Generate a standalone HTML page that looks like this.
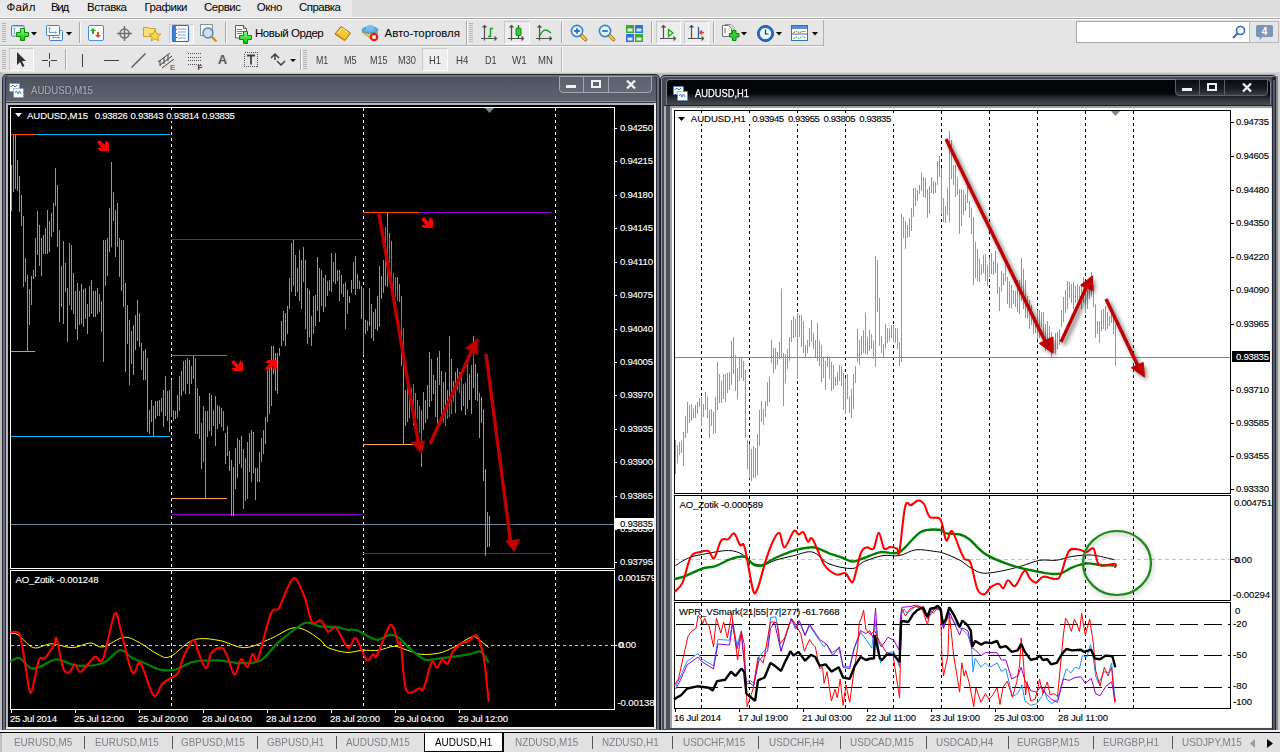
<!DOCTYPE html><html><head><meta charset="utf-8"><style>
*{margin:0;padding:0;box-sizing:border-box}
html,body{width:1280px;height:752px;overflow:hidden;background:#d4d4d4;font-family:"Liberation Sans", sans-serif;font-size:11px;color:#000}
.a{position:absolute}
.t{position:absolute;white-space:nowrap;line-height:1}
svg{position:absolute;overflow:visible}
</style></head><body>

<div class="a" style="left:0;top:0;width:1280px;height:17px;background:#dcdcdc"></div>
<div class="a" style="left:0;top:0;width:352px;height:17px;background:#e9e9e9"></div>
<div class="t" style="left:6.5px;top:2.27px;font-size:11.5px;letter-spacing:0.242px;color:#000;">Файл</div>
<div class="t" style="left:51px;top:2.27px;font-size:11.5px;letter-spacing:-1.302px;color:#000;">Вид</div>
<div class="t" style="left:87px;top:2.27px;font-size:11.5px;letter-spacing:-0.457px;color:#000;">Вставка</div>
<div class="t" style="left:144.4px;top:2.27px;font-size:11.5px;letter-spacing:-0.452px;color:#000;">Графики</div>
<div class="t" style="left:204px;top:2.27px;font-size:11.5px;letter-spacing:-0.476px;color:#000;">Сервис</div>
<div class="t" style="left:256.7px;top:2.27px;font-size:11.5px;letter-spacing:-0.341px;color:#000;">Окно</div>
<div class="t" style="left:299px;top:2.27px;font-size:11.5px;letter-spacing:-0.519px;color:#000;">Справка</div>
<div class="a" style="left:0;top:17px;width:1280px;height:55px;background:#e4e4e4"></div>
<div class="a" style="left:0;top:17px;width:1280px;height:1px;background:#fdfdfd"></div>
<div class="a" style="left:0;top:18px;width:1280px;height:1px;background:#a0a0a0"></div>
<div class="a" style="left:0;top:19px;width:1280px;height:1px;background:#fdfdfd"></div>
<div class="a" style="left:0;top:20px;width:824px;height:26px;background:#e6e6e6;border-bottom:1px solid #b0b0b0;border-right:1px solid #b0b0b0"></div><div class="a" style="left:0;top:46px;width:823px;height:1px;background:#fafafa"></div><div class="a" style="left:0;top:47px;width:563px;height:25px;background:#e6e6e6;border-right:1px solid #fafafa;box-shadow:inset -1px 0 0 #b4b4b4"></div><div class="a" style="left:2px;top:23px;width:4px;height:1px;background:#b4b4b4"></div><div class="a" style="left:2px;top:25px;width:4px;height:1px;background:#b4b4b4"></div><div class="a" style="left:2px;top:27px;width:4px;height:1px;background:#b4b4b4"></div><div class="a" style="left:2px;top:29px;width:4px;height:1px;background:#b4b4b4"></div><div class="a" style="left:2px;top:31px;width:4px;height:1px;background:#b4b4b4"></div><div class="a" style="left:2px;top:33px;width:4px;height:1px;background:#b4b4b4"></div><div class="a" style="left:2px;top:35px;width:4px;height:1px;background:#b4b4b4"></div><div class="a" style="left:2px;top:37px;width:4px;height:1px;background:#b4b4b4"></div><div class="a" style="left:2px;top:39px;width:4px;height:1px;background:#b4b4b4"></div><div class="a" style="left:2px;top:41px;width:4px;height:1px;background:#b4b4b4"></div><div class="a" style="left:2px;top:50px;width:4px;height:1px;background:#b4b4b4"></div><div class="a" style="left:2px;top:52px;width:4px;height:1px;background:#b4b4b4"></div><div class="a" style="left:2px;top:54px;width:4px;height:1px;background:#b4b4b4"></div><div class="a" style="left:2px;top:56px;width:4px;height:1px;background:#b4b4b4"></div><div class="a" style="left:2px;top:58px;width:4px;height:1px;background:#b4b4b4"></div><div class="a" style="left:2px;top:60px;width:4px;height:1px;background:#b4b4b4"></div><div class="a" style="left:2px;top:62px;width:4px;height:1px;background:#b4b4b4"></div><div class="a" style="left:2px;top:64px;width:4px;height:1px;background:#b4b4b4"></div><div class="a" style="left:2px;top:66px;width:4px;height:1px;background:#b4b4b4"></div><div class="a" style="left:2px;top:68px;width:4px;height:1px;background:#b4b4b4"></div><div class="a" style="left:469px;top:23px;width:4px;height:1px;background:#b4b4b4"></div><div class="a" style="left:469px;top:25px;width:4px;height:1px;background:#b4b4b4"></div><div class="a" style="left:469px;top:27px;width:4px;height:1px;background:#b4b4b4"></div><div class="a" style="left:469px;top:29px;width:4px;height:1px;background:#b4b4b4"></div><div class="a" style="left:469px;top:31px;width:4px;height:1px;background:#b4b4b4"></div><div class="a" style="left:469px;top:33px;width:4px;height:1px;background:#b4b4b4"></div><div class="a" style="left:469px;top:35px;width:4px;height:1px;background:#b4b4b4"></div><div class="a" style="left:469px;top:37px;width:4px;height:1px;background:#b4b4b4"></div><div class="a" style="left:469px;top:39px;width:4px;height:1px;background:#b4b4b4"></div><div class="a" style="left:469px;top:41px;width:4px;height:1px;background:#b4b4b4"></div><div class="a" style="left:303px;top:50px;width:4px;height:1px;background:#b4b4b4"></div><div class="a" style="left:303px;top:52px;width:4px;height:1px;background:#b4b4b4"></div><div class="a" style="left:303px;top:54px;width:4px;height:1px;background:#b4b4b4"></div><div class="a" style="left:303px;top:56px;width:4px;height:1px;background:#b4b4b4"></div><div class="a" style="left:303px;top:58px;width:4px;height:1px;background:#b4b4b4"></div><div class="a" style="left:303px;top:60px;width:4px;height:1px;background:#b4b4b4"></div><div class="a" style="left:303px;top:62px;width:4px;height:1px;background:#b4b4b4"></div><div class="a" style="left:303px;top:64px;width:4px;height:1px;background:#b4b4b4"></div><div class="a" style="left:303px;top:66px;width:4px;height:1px;background:#b4b4b4"></div><div class="a" style="left:303px;top:68px;width:4px;height:1px;background:#b4b4b4"></div><svg style="left:11px;top:25px" width="18" height="16" viewBox="0 0 18 16"><defs><linearGradient id="gp" x1="0" y1="0" x2="0" y2="1"><stop offset="0" stop-color="#7aff7a"/><stop offset="1" stop-color="#10c010"/></linearGradient></defs><rect x="0.5" y="0.5" width="12.5" height="10.5" rx="1" fill="#f4f8fc" stroke="#3f7fc4"/><path d="M1 1.5h12" stroke="#a8c8f0"/><path d="M3.5 3v6M2.5 4l1-1 1 1M2.5 8l1 1 1-1" stroke="#7f9fbf" fill="none"/></svg><svg style="left:16px;top:28px" width="13" height="13" viewBox="0 0 13 13"><path d="M4.5 0.5h4v4h4v4h-4v4h-4v-4h-4v-4h4z" fill="url(#gp)" stroke="#0a8a0a" stroke-linejoin="miter"/></svg><svg style="left:31px;top:32px" width="6" height="4" viewBox="0 0 6 4"><path d="M0 0H6L3 3.5z" fill="#000"/></svg><svg style="left:46px;top:25px" width="18" height="17" viewBox="0 0 18 17"><rect x="3.5" y="5.5" width="13" height="10" rx="1" fill="#f4f8fc" stroke="#3f7fc4"/><rect x="0.5" y="0.5" width="13" height="10" rx="1" fill="#f4f8fc" stroke="#3f7fc4"/><path d="M3.5 2.5v5.5M2.5 3.5l1-1 1 1M3.5 7.5h7M9.5 6.5l1 1-1 1M6.5 12.5h7M7.5 11.5l-1 1 1 1M12.5 11.5l1 1-1 1" stroke="#7f9fbf" fill="none"/></svg><svg style="left:66px;top:32px" width="6" height="4" viewBox="0 0 6 4"><path d="M0 0H6L3 3.5z" fill="#000"/></svg><div class="a" style="left:79px;top:22px;width:1px;height:21px;background:#a8a8a8"></div><div class="a" style="left:80px;top:22px;width:1px;height:21px;background:#fafafa"></div><svg style="left:88px;top:25px" width="16" height="16" viewBox="0 0 16 16"><rect x="0.5" y="0.5" width="15" height="15" rx="1.5" fill="#f8fbff" stroke="#3f8fe0"/><path d="M5 3l3 3h-2v3h-2v-3h-2z" fill="#20b020"/><path d="M10 13l3-3h-2v-3h-2v3h-2z" fill="#e05020"/></svg><svg style="left:117px;top:26px" width="15" height="15" viewBox="0 0 15 15"><circle cx="7.5" cy="7.5" r="4.5" fill="none" stroke="#707070" stroke-width="1.5"/><path d="M7.5 0v15M0 7.5h15" stroke="#707070" stroke-width="1.5"/></svg><svg style="left:143px;top:24px" width="18" height="18" viewBox="0 0 18 18"><path d="M0.5 3.5h5l1 1h6v8h-12z" fill="#f8e080" stroke="#c8a030"/><path d="M12 6l1.8 3.8 4 .4-3 2.7.9 4-3.7-2.1-3.7 2.1.9-4-3-2.7 4-.4z" fill="#f8d840" stroke="#b89020" stroke-width=".8"/></svg><div class="a" style="left:169px;top:24px;width:25px;height:20px;background:#ededed;border:1px solid;border-color:#c8c8c8 #fdfdfd #fdfdfd #c8c8c8"></div><svg style="left:172px;top:25px" width="17" height="17" viewBox="0 0 17 17"><rect x="0.5" y="0.5" width="16" height="16" rx="1" fill="#fff" stroke="#2f6fc0" stroke-width="1.2"/><rect x="1" y="1" width="3" height="15" fill="#3f7fd0"/><path d="M6 4h8M6 7h8M6 10h8M6 13h8" stroke="#7f9fcf"/><path d="M4.5 4v1M4.5 8v1M4.5 12v1" stroke="#e03030"/></svg><svg style="left:200px;top:24px" width="18" height="18" viewBox="0 0 18 18"><rect x="0.5" y="0.5" width="12" height="11" fill="#f8f8f8" stroke="#909090"/><circle cx="8" cy="9" r="5" fill="#c8e0f8" stroke="#6080a0" stroke-width="1.4"/><path d="M11.5 12.5l5 5" stroke="#c89020" stroke-width="2.4"/></svg><div class="a" style="left:225px;top:22px;width:1px;height:21px;background:#a8a8a8"></div><div class="a" style="left:226px;top:22px;width:1px;height:21px;background:#fafafa"></div><svg style="left:235px;top:25px" width="17" height="18" viewBox="0 0 17 18"><path d="M0.5 0.5h8l3 3v9.5h-11z" fill="#fafafa" stroke="#606060"/><path d="M8.5 0.5v3h3" fill="#d0d0d0" stroke="#606060"/><path d="M2 4.5h5M2 6.5h7M2 8.5h5" stroke="#808080"/></svg><svg style="left:239px;top:31px" width="13" height="13" viewBox="0 0 13 13"><path d="M4.5 0.5h4v4h4v4h-4v4h-4v-4h-4v-4h4z" fill="url(#gp)" stroke="#0a8a0a"/></svg><div class="t" style="left:255px;top:28.07px;font-size:11.5px;letter-spacing:-0.452px;color:#000;">Новый Ордер</div><svg style="left:334px;top:25px" width="18" height="17" viewBox="0 0 18 17"><path d="M1 9L7 1.5L16.5 8L11 15.5Z" fill="#f2c830" stroke="#a06810" stroke-linejoin="round"/><path d="M2.5 9.5L11 15.5" stroke="#c89020" stroke-width="2"/><path d="M4 8L8 3L14 7.5" fill="none" stroke="#fff2a8"/></svg><svg style="left:361px;top:24px" width="18" height="18" viewBox="0 0 18 18"><path d="M1 8l9-3 7 4-5 7z" fill="#f0d040" stroke="#b08020" stroke-width=".8"/><ellipse cx="9" cy="6" rx="8" ry="3.2" fill="#5fb0e0" stroke="#3080b0" stroke-width=".8"/><ellipse cx="9" cy="4" rx="4" ry="3" fill="#70c0f0"/><circle cx="13" cy="13" r="4.3" fill="#e02020"/><rect x="11.3" y="11.3" width="3.4" height="3.4" fill="#fff"/></svg><div class="t" style="left:384.5px;top:28.07px;font-size:11.5px;letter-spacing:-0.037px;color:#000;">Авто-торговля</div><div class="a" style="left:466px;top:21px;width:1px;height:24px;background:#a8a8a8"></div><div class="a" style="left:467px;top:21px;width:1px;height:24px;background:#fafafa"></div><svg style="left:480px;top:24px" width="18" height="18" viewBox="0 0 18 18"><path d="M4.5 1.5V15M2.5 3.5L4.5 1.5L6.5 3.5M1 14.5H16.5M14.5 12.5L16.5 14.5L14.5 16.5M4.5 14.5V16.5M1.5 14.5" stroke="#505050" fill="none" stroke-width="1.2"/><path d="M13 4.5H10.5V12.5H8" stroke="#20a020" fill="none" stroke-width="1.5" stroke-linejoin="miter" stroke-linecap="butt"/></svg><div class="a" style="left:504px;top:21px;width:26px;height:23px;background:#ededed;border:1px solid;border-color:#c8c8c8 #fdfdfd #fdfdfd #c8c8c8"></div><svg style="left:507px;top:24px" width="18" height="18" viewBox="0 0 18 18"><path d="M4.5 1.5V15M2.5 3.5L4.5 1.5L6.5 3.5M1 14.5H16.5M14.5 12.5L16.5 14.5L14.5 16.5M4.5 14.5V16.5M1.5 14.5" stroke="#505050" fill="none" stroke-width="1.2"/><path d="M11.5 1V14" stroke="#206020" stroke-width="1.2"/><rect x="9" y="4" width="5" height="7.5" rx="1" fill="#30d030" stroke="#208020"/></svg><svg style="left:535px;top:24px" width="18" height="18" viewBox="0 0 18 18"><path d="M4.5 1.5V15M2.5 3.5L4.5 1.5L6.5 3.5M1 14.5H16.5M14.5 12.5L16.5 14.5L14.5 16.5M4.5 14.5V16.5M1.5 14.5" stroke="#505050" fill="none" stroke-width="1.2"/><path d="M5 11.5C8 5 11 4.5 16 9" stroke="#20a020" fill="none" stroke-width="1.4"/></svg><div class="a" style="left:561px;top:22px;width:1px;height:21px;background:#a8a8a8"></div><div class="a" style="left:562px;top:22px;width:1px;height:21px;background:#fafafa"></div><svg style="left:570px;top:24px" width="18" height="18" viewBox="0 0 18 18"><path d="M10.5 10.5L15.5 15.5" stroke="#8a6a10" stroke-width="3.6" stroke-linecap="round"/><path d="M10.5 10.5L15.5 15.5" stroke="#f0d040" stroke-width="2.2" stroke-linecap="round"/><circle cx="7" cy="7" r="5.6" fill="#e4f2fc" stroke="#3a80c8" stroke-width="1.6"/><path d="M4.2 7h5.6M7 4.2v5.6" stroke="#2f6fc0" stroke-width="1.8"/></svg><svg style="left:598px;top:24px" width="18" height="18" viewBox="0 0 18 18"><path d="M10.5 10.5L15.5 15.5" stroke="#8a6a10" stroke-width="3.6" stroke-linecap="round"/><path d="M10.5 10.5L15.5 15.5" stroke="#f0d040" stroke-width="2.2" stroke-linecap="round"/><circle cx="7" cy="7" r="5.6" fill="#e4f2fc" stroke="#3a80c8" stroke-width="1.6"/><path d="M4.2 7h5.6" stroke="#2f6fc0" stroke-width="1.8"/></svg><svg style="left:626px;top:25px" width="17" height="17" viewBox="0 0 17 17"><rect x="0" y="0" width="8" height="8" fill="#38a838"/><rect x="9" y="0" width="8" height="8" fill="#2f6fd8"/><rect x="0" y="9" width="8" height="8" fill="#2f6fd8"/><rect x="9" y="9" width="8" height="8" fill="#38a838"/><path d="M1.5 3.5h5v3h-5zM10.5 3.5h5v3h-5zM1.5 12.5h5v3h-5zM10.5 12.5h5v3h-5z" fill="#fff" fill-opacity=".85"/></svg><div class="a" style="left:651px;top:22px;width:1px;height:21px;background:#a8a8a8"></div><div class="a" style="left:652px;top:22px;width:1px;height:21px;background:#fafafa"></div><div class="a" style="left:656px;top:21px;width:25px;height:23px;background:#ededed;border:1px solid;border-color:#c8c8c8 #fdfdfd #fdfdfd #c8c8c8"></div><svg style="left:659px;top:24px" width="18" height="18" viewBox="0 0 18 18"><path d="M4.5 1.5V15M2.5 3.5L4.5 1.5L6.5 3.5M1 14.5H16.5M14.5 12.5L16.5 14.5L14.5 16.5" stroke="#505050" fill="none" stroke-width="1.2"/><path d="M9.5 5.5L14 9L9.5 12.5Z" stroke="#20a020" fill="#e8f8e8" stroke-width="1.3"/></svg><div class="a" style="left:684px;top:21px;width:25px;height:23px;background:#ededed;border:1px solid;border-color:#c8c8c8 #fdfdfd #fdfdfd #c8c8c8"></div><svg style="left:687px;top:24px" width="18" height="18" viewBox="0 0 18 18"><path d="M4.5 1.5V15M2.5 3.5L4.5 1.5L6.5 3.5M1 14.5H16.5M14.5 12.5L16.5 14.5L14.5 16.5" stroke="#505050" fill="none" stroke-width="1.2"/><path d="M11.5 3V14" stroke="#2060b0" stroke-width="1.3"/><path d="M12.5 8.5H17M12.5 8.5L15 6.5M12.5 8.5L15 10.5" stroke="#e04010" fill="none" stroke-width="1.4"/></svg><div class="a" style="left:713px;top:22px;width:1px;height:21px;background:#a8a8a8"></div><div class="a" style="left:714px;top:22px;width:1px;height:21px;background:#fafafa"></div><svg style="left:722px;top:24px" width="18" height="18" viewBox="0 0 18 18"><path d="M0.5 1.5h6l3 3v8h-9z" fill="#fafafa" stroke="#707070"/><path d="M3 0.5h6l3 3v8" fill="none" stroke="#909090"/><path d="M3 4v5" stroke="#707070"/><path d="M7.5 9.5h3v-3h3.5v3h3v3.5h-3v3.5h-3.5v-3.5h-3z" fill="#30d030" stroke="#108010"/></svg><svg style="left:741px;top:32px" width="6" height="4" viewBox="0 0 6 4"><path d="M0 0H6L3 3.5z" fill="#000"/></svg><svg style="left:757px;top:25px" width="17" height="17" viewBox="0 0 17 17"><circle cx="8.5" cy="8.5" r="8" fill="#1f6fd0" stroke="#1a4a90"/><circle cx="8.5" cy="8.5" r="5.6" fill="#f4f8fc"/><path d="M8.5 4.5v4.5h3" stroke="#303030" fill="none" stroke-width="1.2"/></svg><svg style="left:776px;top:32px" width="6" height="4" viewBox="0 0 6 4"><path d="M0 0H6L3 3.5z" fill="#000"/></svg><svg style="left:791px;top:25px" width="18" height="16" viewBox="0 0 18 16"><rect x="0.5" y="0.5" width="16" height="15" fill="#fff" stroke="#2f6fc0"/><rect x="1" y="1" width="15" height="3" fill="#5a8fd8"/><path d="M1 9H16" stroke="#2f6fc0"/><path d="M2.5 7.5l3-1 3 1 3-1 3 0" stroke="#b03020" fill="none" stroke-dasharray="1.5 .8"/><path d="M2.5 13.5l3-1.5 3 1.5 3-2 3 1.5" stroke="#20a020" fill="none" stroke-dasharray="1.5 .8"/></svg><svg style="left:812px;top:32px" width="6" height="4" viewBox="0 0 6 4"><path d="M0 0H6L3 3.5z" fill="#000"/></svg><div class="a" style="left:1076px;top:21px;width:174px;height:22px;background:#fff;border:1px solid #a8a8a8"></div><svg style="left:1232px;top:25px" width="14" height="14" viewBox="0 0 14 14"><circle cx="8.5" cy="5.5" r="4" fill="none" stroke="#2f6fc0" stroke-width="1.6"/><path d="M6 8l-5 5" stroke="#2f6fc0" stroke-width="2.2"/></svg><div class="a" style="left:1249px;top:21px;width:30px;height:22px;background:#e6e6e6;border:1px solid #b8b8b8"></div><svg style="left:1256px;top:25px" width="17" height="17" viewBox="0 0 17 17"><path d="M0 1.5a1.5 1.5 0 0 1 1.5-1.5h14a1.5 1.5 0 0 1 1.5 1.5v9a1.5 1.5 0 0 1-1.5 1.5h-9l-3 3v-3h-2a1.5 1.5 0 0 1-1.5-1.5z" fill="#7d95b5"/><text x="8.5" y="10" font-size="10" fill="#fff" text-anchor="middle" font-family="Liberation Sans" font-weight="bold">4</text></svg><div class="a" style="left:9px;top:48px;width:25px;height:23px;background:#ededed;border:1px solid;border-color:#c8c8c8 #fdfdfd #fdfdfd #c8c8c8"></div><svg style="left:16px;top:52px" width="10" height="15" viewBox="0 0 10 15"><path d="M1 0v13l3-3 2.5 5 2-1-2.5-5h4z" fill="#303030"/></svg><svg style="left:41px;top:52px" width="16" height="16" viewBox="0 0 16 16"><path d="M8.5 1v6M8.5 9v6M1 8.5h6M10 8.5h6" stroke="#404040" shape-rendering="crispEdges"/></svg><div class="a" style="left:65px;top:49px;width:1px;height:21px;background:#a8a8a8"></div><div class="a" style="left:66px;top:49px;width:1px;height:21px;background:#fafafa"></div><div class="a" style="left:82px;top:54px;width:1px;height:13px;background:#404040"></div><div class="a" style="left:104px;top:60px;width:15px;height:1px;background:#404040"></div><svg style="left:131px;top:53px" width="15" height="15" viewBox="0 0 15 15"><path d="M0.5 14.5L14.5 0.5" stroke="#505050" stroke-width="1.2"/></svg><svg style="left:157px;top:51px" width="19" height="20" viewBox="0 0 19 20"><path d="M1 11l12-9M3 14l12-9M5 17l12-9M3 9v6M7 6v7M11 4v6" stroke="#404040" fill="none"/><text x="13" y="19" font-size="8" font-family="Liberation Sans" fill="#404040">E</text></svg><svg style="left:187px;top:51px" width="18" height="20" viewBox="0 0 18 20"><path d="M1 2.5h14M1 6.5h14M1 9.5h14M1 13.5h14" stroke="#505050" stroke-dasharray="1 1" shape-rendering="crispEdges"/><text x="10.5" y="19" font-size="8" font-family="Liberation Sans" fill="#404040" font-weight="bold">F</text></svg><div class="t" style="left:218px;top:54px;font-size:12.5px;color:#555;font-weight:bold">A</div><svg style="left:244px;top:52px" width="14" height="15" viewBox="0 0 14 15"><rect x="0.5" y="0.5" width="13" height="14" fill="none" stroke="#505050" stroke-dasharray="1 1" shape-rendering="crispEdges"/><path d="M3 3.5h8M7 3.5v9" stroke="#404040" stroke-width="1.8"/></svg><svg style="left:270px;top:53px" width="26" height="14" viewBox="0 0 26 14"><path d="M1 5l4-4 4 4M5 1v6" stroke="#404040" fill="none" stroke-width="1.5"/><path d="M7 8l4 4 4-4" stroke="#404040" fill="none" stroke-width="1.5"/><path d="M20 6h6l-3 3z" fill="#000"/></svg><div class="a" style="left:300px;top:49px;width:1px;height:21px;background:#a8a8a8"></div><div class="a" style="left:301px;top:49px;width:1px;height:21px;background:#fafafa"></div><div class="a" style="left:422px;top:48px;width:26px;height:23px;background:#ededed;border:1px solid;border-color:#c8c8c8 #fdfdfd #fdfdfd #c8c8c8"></div><div class="t" style="left:315.8px;top:55.11px;font-size:10.5px;color:#3c3c3c;transform:scaleX(0.843);transform-origin:0 0;">M1</div><div class="t" style="left:343.7px;top:55.11px;font-size:10.5px;color:#3c3c3c;transform:scaleX(0.864);transform-origin:0 0;">M5</div><div class="t" style="left:369.6px;top:55.11px;font-size:10.5px;color:#3c3c3c;transform:scaleX(0.857);transform-origin:0 0;">M15</div><div class="t" style="left:397.5px;top:55.11px;font-size:10.5px;color:#3c3c3c;transform:scaleX(0.876);transform-origin:0 0;">M30</div><div class="t" style="left:428.7px;top:55.11px;font-size:10.5px;color:#3c3c3c;transform:scaleX(0.894);transform-origin:0 0;">H1</div><div class="t" style="left:455.7px;top:55.11px;font-size:10.5px;color:#3c3c3c;transform:scaleX(0.924);transform-origin:0 0;">H4</div><div class="t" style="left:484.6px;top:55.11px;font-size:10.5px;color:#3c3c3c;transform:scaleX(0.864);transform-origin:0 0;">D1</div><div class="t" style="left:511.6px;top:55.11px;font-size:10.5px;color:#3c3c3c;transform:scaleX(0.940);transform-origin:0 0;">W1</div><div class="t" style="left:538.4px;top:55.11px;font-size:10.5px;color:#3c3c3c;transform:scaleX(0.906);transform-origin:0 0;">MN</div>
<div class="a" style="left:0;top:72px;width:1280px;height:660px;background:#c8c8c8"></div>
<div class="a" style="left:0;top:72px;width:1280px;height:3px;background:linear-gradient(#e0e0e0,#a8a8a8)"></div>
<div class="a" style="left:2px;top:74px;width:658px;height:657px;background:#26282e;border-radius:5px 5px 0 0"></div>
<div class="a" style="left:3px;top:75px;width:656px;height:655px;background:#666e8c;border-radius:4px 4px 0 0"></div>
<div class="a" style="left:5px;top:76px;width:652px;height:653px;background:#2c2e34;border-radius:3px 3px 0 0"></div>
<div class="a" style="left:6px;top:76px;width:650px;height:26px;background:linear-gradient(#8a909c 0px,#4c525d 1px,#545b66 40%,#5d6470 100%);border-radius:3px 3px 0 0"></div>
<div class="a" style="left:6px;top:101px;width:650px;height:1px;background:#8a8a9a"></div>
<div class="a" style="left:6px;top:102px;width:650px;height:1px;background:#303844"></div>
<div class="a" style="left:6px;top:103px;width:650px;height:626px;background:#f0f0f0"></div>
<div class="a" style="left:6px;top:103px;width:648px;height:624px;background:#b8b8b8"></div>
<div class="a" style="left:8px;top:105px;width:646px;height:622px;background:#000"></div>
<svg style="left:9px;top:83px" width="15" height="15" viewBox="0 0 15 15">
<rect x="0.5" y="0.5" width="10" height="8" fill="#fff" stroke="#3a8cf0" stroke-dasharray="1 1"/>
<rect x="4.5" y="5.5" width="10" height="9" fill="#fff" stroke="#3a8cf0" stroke-dasharray="1 1"/>
<path d="M2 4l2-2 2 2 2-2" stroke="#3a7fd0" fill="none"/><path d="M6 10l1.5-2 1.5 3 1.5-3 1.5 3" stroke="#3a7fd0" fill="none"/></svg>
<div class="t" style="left:30.5px;top:84.69px;font-size:11px;color:#a6acb6;transform:scaleX(0.874);transform-origin:0 0;text-shadow:0 0 2px rgba(0,0,0,.6);-webkit-text-stroke:0.2px #a6acb6">AUDUSD,M15</div>
<div class="a" style="left:559px;top:76px;width:93px;height:17px;border:1px solid #a4aab4;border-radius:0 0 4px 4px;background:linear-gradient(#5a616c,#646b76)"></div>
<div class="a" style="left:583px;top:76px;width:1px;height:17px;background:#a4aab4"></div>
<div class="a" style="left:608px;top:76px;width:1px;height:17px;background:#a4aab4"></div>
<div class="a" style="left:566px;top:85px;width:10px;height:3px;background:#f0f0f0"></div>
<div class="a" style="left:591px;top:80px;width:10px;height:8px;border:2px solid #f0f0f0;border-top-width:2px"></div>
<svg style="left:626px;top:80px" width="10" height="9" viewBox="0 0 10 9"><path d="M1 0.5L9 8.5M9 0.5L1 8.5" stroke="#f0f0f0" stroke-width="2.4"/></svg>
<div class="a" style="left:660px;top:75px;width:617px;height:656px;background:#1c1e22;border-radius:5px 5px 0 0"></div>
<div class="a" style="left:661px;top:76px;width:615px;height:654px;background:#8a90a0;border-radius:4px 4px 0 0"></div>
<div class="a" style="left:662px;top:77px;width:614px;height:653px;background:#464a54;border-radius:3px 3px 0 0"></div>
<div class="a" style="left:666px;top:79px;width:605px;height:26px;background:#7a8094;border-radius:4px 4px 0 0"></div>
<div class="a" style="left:667px;top:80px;width:603px;height:25px;background:linear-gradient(#020408 0%,#05070c 55%,#2a2e34 72%,#464a52 100%);border-radius:3px 3px 0 0"></div>
<div class="a" style="left:664px;top:105px;width:608px;height:1px;background:#202226"></div>
<div class="a" style="left:664px;top:106px;width:2px;height:623px;background:#b0b0b0"></div>
<div class="a" style="left:666px;top:106px;width:4px;height:623px;background:#4a5060"></div>
<div class="a" style="left:670px;top:106px;width:602px;height:622px;background:#a0a0a0"></div>
<div class="a" style="left:672px;top:108px;width:600px;height:620px;background:#f4f4f4"></div>
<div class="a" style="left:672px;top:108px;width:599px;height:619px;background:#fff"></div>
<div class="a" style="left:1272px;top:77px;width:4px;height:653px;background:#22262c"></div>
<div class="a" style="left:1273px;top:80px;width:2px;height:650px;background:#505870"></div>
<div class="a" style="left:1271px;top:108px;width:1px;height:620px;background:#e4e4e4"></div>
<svg style="left:673px;top:86px" width="15" height="15" viewBox="0 0 15 15">
<rect x="0.5" y="0.5" width="10" height="8" fill="#fff" stroke="#3a8cf0" stroke-dasharray="1 1"/>
<rect x="4.5" y="5.5" width="10" height="9" fill="#fff" stroke="#3a8cf0" stroke-dasharray="1 1"/>
<path d="M2 4l2-2 2 2 2-2" stroke="#3a7fd0" fill="none"/><path d="M6 10l1.5-2 1.5 3 1.5-3 1.5 3" stroke="#3a7fd0" fill="none"/></svg>
<div class="t" style="left:695px;top:87.69px;font-size:11px;color:#ffffff;transform:scaleX(0.849);transform-origin:0 0;text-shadow:0 0 3px rgba(0,0,0,.9);-webkit-text-stroke:0.25px #fff">AUDUSD,H1</div>
<div class="a" style="left:1175px;top:79px;width:93px;height:17px;border:1px solid #5a6070;border-radius:0 0 4px 4px;background:linear-gradient(#0a0c10,#1a1d22 60%,#3a3e46)"></div>
<div class="a" style="left:1199px;top:79px;width:1px;height:17px;background:#5a6070"></div>
<div class="a" style="left:1224px;top:79px;width:1px;height:17px;background:#5a6070"></div>
<div class="a" style="left:1182px;top:88px;width:10px;height:3px;background:#f0f0f0"></div>
<div class="a" style="left:1207px;top:83px;width:10px;height:8px;border:2px solid #f0f0f0;border-top-width:2px"></div>
<svg style="left:1242px;top:83px" width="10" height="9" viewBox="0 0 10 9"><path d="M1 0.5L9 8.5M9 0.5L1 8.5" stroke="#f0f0f0" stroke-width="2.4"/></svg>
<div class="a" style="left:1276px;top:72px;width:4px;height:660px;background:#d0d0d0"></div>
<div class="a" style="left:1276px;top:76px;width:2px;height:656px;background:#888888"></div>
<div class="a" style="left:0px;top:72px;width:2px;height:661px;background:#bcbcbc"></div>
<svg style="left:0;top:0" width="1280" height="752" viewBox="0 0 1280 752"><defs><filter id="shd" x="-20%" y="-20%" width="140%" height="140%"><feGaussianBlur stdDeviation="2"/></filter></defs><g style="font-family:'Liberation Sans',sans-serif"><path d="M171.5 108V568M171.5 571V709" stroke="#ffffff" stroke-dasharray="3 3" shape-rendering="crispEdges"/><path d="M363.5 108V568M363.5 571V709" stroke="#ffffff" stroke-dasharray="3 3" shape-rendering="crispEdges"/><path d="M555.5 108V568M555.5 571V709" stroke="#ffffff" stroke-dasharray="3 3" shape-rendering="crispEdges"/><path d="M11 645.5H614" stroke="#c8c8d0" stroke-dasharray="3 3" shape-rendering="crispEdges"/><path d="M11 524.5H614" stroke="#778899" shape-rendering="crispEdges"/><path d="M11 134.5H35" stroke="#ff4500" shape-rendering="crispEdges"/><path d="M35 134.5H170" stroke="#00bfff" shape-rendering="crispEdges"/><path d="M11 351.5H35" stroke="#ff8c40" shape-rendering="crispEdges"/><path d="M11 436.5H170" stroke="#00bfff" shape-rendering="crispEdges"/><path d="M171 239.5H362" stroke="#9400d3" shape-rendering="crispEdges"/><path d="M171 355.5H227" stroke="#ff4500" shape-rendering="crispEdges"/><path d="M171 498.5H227" stroke="#f4a460" shape-rendering="crispEdges"/><path d="M171 514.5H362" stroke="#9400d3" shape-rendering="crispEdges"/><path d="M363 212.5H419" stroke="#ff4500" shape-rendering="crispEdges"/><path d="M419 212.5H552" stroke="#9400d3" shape-rendering="crispEdges"/><path d="M363 444.5H413" stroke="#f4a460" shape-rendering="crispEdges"/><path d="M363 553.5H552" stroke="#9400d3" shape-rendering="crispEdges"/><path d="M11.5 165V211M13.5 135V192M15.5 135V189M17.5 160V191M19.5 176V212M21.5 195V226M23.5 216V287M25.5 258V282M27.5 275V352M29.5 289V325M31.5 276V305M33.5 270V279M35.5 238V277M37.5 211V255M39.5 225V266M41.5 238V276M43.5 235V254M45.5 228V254M47.5 210V254M49.5 221V252M51.5 213V237M53.5 203V232M55.5 168V206M57.5 185V247M59.5 230V322M61.5 266V307M63.5 241V324M65.5 263V292M67.5 288V342M69.5 243V305M71.5 245V310M73.5 273V314M75.5 291V329M77.5 283V340M79.5 291V325M81.5 284V324M83.5 289V327M85.5 288V319M87.5 304V334M89.5 286V317M91.5 280V314M93.5 291V317M95.5 291V317M97.5 288V314M99.5 294V312M101.5 301V332M103.5 240V362M105.5 240V286M107.5 238V276M109.5 208V252M111.5 162V247M113.5 192V221M115.5 210V257M117.5 203V247M119.5 238V277M121.5 240V291M123.5 240V307M125.5 283V372M127.5 305V344M129.5 320V385M131.5 331V364M133.5 325V375M135.5 315V350M137.5 300V341M139.5 313V347M141.5 343V370M143.5 351V380M145.5 349V380M147.5 358V432M149.5 410V434M151.5 400V422M153.5 406V437M155.5 401V419M157.5 401V416M159.5 400V416M161.5 398V412M163.5 390V427M165.5 376V416M167.5 391V421M169.5 390V432M171.5 380V417M173.5 410V421M175.5 411V419M177.5 395V417M179.5 376V411M181.5 371V396M183.5 361V391M185.5 360V394M187.5 358V384M189.5 360V394M191.5 366V384M193.5 356V379M195.5 358V434M197.5 388V434M199.5 396V439M201.5 423V469M203.5 406V462M205.5 411V499M207.5 411V437M209.5 393V431M211.5 395V436M213.5 410V426M215.5 396V446M217.5 405V429M219.5 406V424M221.5 408V427M223.5 411V431M225.5 433V464M227.5 426V456M229.5 451V471M231.5 460V516M233.5 467V516M235.5 448V489M237.5 438V478M239.5 440V464M241.5 436V468M243.5 449V509M245.5 458V501M247.5 442V499M249.5 433V472M251.5 430V482M253.5 432V473M255.5 468V500M257.5 468V482M259.5 452V482M261.5 438V462M263.5 430V454M265.5 417V444M267.5 370V422M269.5 366V414M271.5 346V406M273.5 346V374M275.5 353V391M277.5 353V394M279.5 348V356M281.5 321V346M283.5 311V341M285.5 313V346M287.5 306V334M289.5 278V309M291.5 243V292M293.5 240V286M295.5 255V296M297.5 268V292M299.5 250V301M301.5 260V309M303.5 247V282M305.5 260V329M307.5 288V344M309.5 290V337M311.5 316V346M313.5 296V334M315.5 295V326M317.5 257V311M319.5 268V322M321.5 270V306M323.5 278V312M325.5 275V307M327.5 281V296M329.5 280V291M331.5 253V292M333.5 262V282M335.5 253V284M337.5 270V281M339.5 270V301M341.5 275V294M343.5 284V297M345.5 282V329M347.5 290V314M349.5 296V303M351.5 280V293M353.5 262V289M355.5 256V295M357.5 274V289M359.5 281V289M361.5 286V319M363.5 288V355M365.5 320V334M367.5 321V331M369.5 288V326M371.5 304V338M373.5 312V341M375.5 309V329M377.5 296V331M379.5 266V327M381.5 276V299M383.5 260V293M385.5 227V286M387.5 212V287M389.5 233V263M391.5 241V293M393.5 273V302M395.5 277V297M397.5 277V301M399.5 284V302M401.5 296V366M403.5 328V445M405.5 390V426M407.5 382V422M409.5 393V418M411.5 388V411M413.5 384V426M415.5 393V419M417.5 400V419M419.5 406V433M421.5 410V467M423.5 392V430M425.5 400V423M427.5 385V419M429.5 352V407M431.5 359V401M433.5 375V394M435.5 380V417M437.5 357V425M439.5 351V385M441.5 371V414M443.5 382V423M445.5 372V426M447.5 390V419M449.5 336V417M451.5 359V414M453.5 381V402M455.5 372V413M457.5 368V391M459.5 372V393M461.5 375V411M463.5 384V406M465.5 383V415M467.5 364V409M469.5 374V400M471.5 365V414M473.5 336V388M475.5 364V400M477.5 373V401M479.5 393V438M481.5 397V423M483.5 409V481M485.5 469V556M487.5 512V547M489.5 516V547" stroke="#00ff00" shape-rendering="crispEdges"/><path d="M10.5 107.5H614.5V568.5H10.5Z M10.5 570.5H614.5V709.5H10.5Z" fill="none" stroke="#ffffff" shape-rendering="crispEdges"/><polygon points="485,108 494,108 489.5,113" fill="#778899"/><path d="M615 128.5H617" stroke="#ffffff" shape-rendering="crispEdges"/><text x="620" y="131" fill="#ffffff" stroke="#ffffff" stroke-width="0.12" font-size="9.6" letter-spacing="-0.28" text-anchor="start" >0.94250</text><path d="M615 161.5H617" stroke="#ffffff" shape-rendering="crispEdges"/><text x="620" y="164" fill="#ffffff" stroke="#ffffff" stroke-width="0.12" font-size="9.6" letter-spacing="-0.28" text-anchor="start" >0.94215</text><path d="M615 195.5H617" stroke="#ffffff" shape-rendering="crispEdges"/><text x="620" y="198" fill="#ffffff" stroke="#ffffff" stroke-width="0.12" font-size="9.6" letter-spacing="-0.28" text-anchor="start" >0.94180</text><path d="M615 228.5H617" stroke="#ffffff" shape-rendering="crispEdges"/><text x="620" y="231" fill="#ffffff" stroke="#ffffff" stroke-width="0.12" font-size="9.6" letter-spacing="-0.28" text-anchor="start" >0.94145</text><path d="M615 262.5H617" stroke="#ffffff" shape-rendering="crispEdges"/><text x="620" y="265" fill="#ffffff" stroke="#ffffff" stroke-width="0.12" font-size="9.6" letter-spacing="-0.161" text-anchor="start" >0.94110</text><path d="M615 295.5H617" stroke="#ffffff" shape-rendering="crispEdges"/><text x="620" y="298" fill="#ffffff" stroke="#ffffff" stroke-width="0.12" font-size="9.6" letter-spacing="-0.28" text-anchor="start" >0.94075</text><path d="M615 329.5H617" stroke="#ffffff" shape-rendering="crispEdges"/><text x="620" y="332" fill="#ffffff" stroke="#ffffff" stroke-width="0.12" font-size="9.6" letter-spacing="-0.28" text-anchor="start" >0.94040</text><path d="M615 362.5H617" stroke="#ffffff" shape-rendering="crispEdges"/><text x="620" y="365" fill="#ffffff" stroke="#ffffff" stroke-width="0.12" font-size="9.6" letter-spacing="-0.28" text-anchor="start" >0.94005</text><path d="M615 395.5H617" stroke="#ffffff" shape-rendering="crispEdges"/><text x="620" y="398" fill="#ffffff" stroke="#ffffff" stroke-width="0.12" font-size="9.6" letter-spacing="-0.28" text-anchor="start" >0.93970</text><path d="M615 429.5H617" stroke="#ffffff" shape-rendering="crispEdges"/><text x="620" y="432" fill="#ffffff" stroke="#ffffff" stroke-width="0.12" font-size="9.6" letter-spacing="-0.28" text-anchor="start" >0.93935</text><path d="M615 462.5H617" stroke="#ffffff" shape-rendering="crispEdges"/><text x="620" y="465" fill="#ffffff" stroke="#ffffff" stroke-width="0.12" font-size="9.6" letter-spacing="-0.28" text-anchor="start" >0.93900</text><path d="M615 496.5H617" stroke="#ffffff" shape-rendering="crispEdges"/><text x="620" y="499" fill="#ffffff" stroke="#ffffff" stroke-width="0.12" font-size="9.6" letter-spacing="-0.28" text-anchor="start" >0.93865</text><path d="M615 529.5H617" stroke="#ffffff" shape-rendering="crispEdges"/><text x="620" y="532" fill="#ffffff" stroke="#ffffff" stroke-width="0.12" font-size="9.6" letter-spacing="-0.28" text-anchor="start" >0.93830</text><path d="M615 562.5H617" stroke="#ffffff" shape-rendering="crispEdges"/><text x="620" y="565" fill="#ffffff" stroke="#ffffff" stroke-width="0.12" font-size="9.6" letter-spacing="-0.28" text-anchor="start" >0.93795</text><path d="M614 518H654V529H614Z" fill="#fff"/><text x="620" y="527" fill="#000" stroke="#000" stroke-width="0.12" font-size="9.6" letter-spacing="-0.28" text-anchor="start" >0.93835</text><text x="618" y="580.6" fill="#ffffff" stroke="#ffffff" stroke-width="0.12" font-size="9.6" letter-spacing="-0.288" text-anchor="start" >0.001579</text><text x="618" y="647.5" fill="#ffffff" stroke="#ffffff" stroke-width="0.12" font-size="9.6" letter-spacing="-0.224" text-anchor="start" >0.00</text><text x="619" y="647.5" fill="#ffffff" stroke="#ffffff" stroke-width="0.12" font-size="9.6" letter-spacing="-0.336" text-anchor="start" >0</text><text x="617.5" y="706" fill="#ffffff" stroke="#ffffff" stroke-width="0.12" font-size="9.6" letter-spacing="-0.125" text-anchor="start" >-0.00138</text><path d="M615 645.5H617" stroke="#ffffff" shape-rendering="crispEdges"/><path d="M11.5 710V713" stroke="#ffffff" shape-rendering="crispEdges"/><text x="10" y="722" fill="#ffffff" stroke="#ffffff" stroke-width="0.12" font-size="9.6" letter-spacing="-0.261" text-anchor="start" >25 Jul 2014</text><path d="M75.5 710V713" stroke="#ffffff" shape-rendering="crispEdges"/><text x="74" y="722" fill="#ffffff" stroke="#ffffff" stroke-width="0.12" font-size="9.6" letter-spacing="-0.207" text-anchor="start" >25 Jul 12:00</text><path d="M139.5 710V713" stroke="#ffffff" shape-rendering="crispEdges"/><text x="138" y="722" fill="#ffffff" stroke="#ffffff" stroke-width="0.12" font-size="9.6" letter-spacing="-0.207" text-anchor="start" >25 Jul 20:00</text><path d="M203.5 710V713" stroke="#ffffff" shape-rendering="crispEdges"/><text x="202" y="722" fill="#ffffff" stroke="#ffffff" stroke-width="0.12" font-size="9.6" letter-spacing="-0.207" text-anchor="start" >28 Jul 04:00</text><path d="M267.5 710V713" stroke="#ffffff" shape-rendering="crispEdges"/><text x="266" y="722" fill="#ffffff" stroke="#ffffff" stroke-width="0.12" font-size="9.6" letter-spacing="-0.207" text-anchor="start" >28 Jul 12:00</text><path d="M331.5 710V713" stroke="#ffffff" shape-rendering="crispEdges"/><text x="330" y="722" fill="#ffffff" stroke="#ffffff" stroke-width="0.12" font-size="9.6" letter-spacing="-0.207" text-anchor="start" >28 Jul 20:00</text><path d="M395.5 710V713" stroke="#ffffff" shape-rendering="crispEdges"/><text x="394" y="722" fill="#ffffff" stroke="#ffffff" stroke-width="0.12" font-size="9.6" letter-spacing="-0.207" text-anchor="start" >29 Jul 04:00</text><path d="M459.5 710V713" stroke="#ffffff" shape-rendering="crispEdges"/><text x="458" y="722" fill="#ffffff" stroke="#ffffff" stroke-width="0.12" font-size="9.6" letter-spacing="-0.207" text-anchor="start" >29 Jul 12:00</text><rect x="11" y="110" width="226" height="11" fill="#000"/><polygon points="15,113 22,113 18.5,117" fill="#fff"/><text x="27" y="119" fill="#ffffff" stroke="#ffffff" stroke-width="0.12" font-size="9.6" letter-spacing="-0.093" text-anchor="start" >AUDUSD,M15</text><text x="94.8" y="119" fill="#ffffff" stroke="#ffffff" stroke-width="0.12" font-size="9.6" letter-spacing="-0.28" text-anchor="start" >0.93826</text><text x="130.5" y="119" fill="#ffffff" stroke="#ffffff" stroke-width="0.12" font-size="9.6" letter-spacing="-0.28" text-anchor="start" >0.93843</text><text x="166.2" y="119" fill="#ffffff" stroke="#ffffff" stroke-width="0.12" font-size="9.6" letter-spacing="-0.28" text-anchor="start" >0.93814</text><text x="201.9" y="119" fill="#ffffff" stroke="#ffffff" stroke-width="0.12" font-size="9.6" letter-spacing="-0.28" text-anchor="start" >0.93835</text><text x="15.5" y="583" fill="#ffffff" stroke="#ffffff" stroke-width="0.12" font-size="9.6" letter-spacing="-0.168" text-anchor="start" >AO_Zotik -0.001248</text><polygon points="97.0,142.4 99.7,140.0 104.6,144.8 106.0,140.0 109.0,142.9 109.0,151.0 100.1,151.0 97.0,148.3 102.0,147.8" fill="#ff0000"/><polygon points="231.0,362.4 233.7,360.0 238.6,364.8 240.0,360.0 243.0,362.9 243.0,371.0 234.1,371.0 231.0,368.3 236.0,367.8" fill="#ff0000"/><polygon points="265.0,368.6 267.7,371.0 272.6,366.2 274.0,371.0 277.0,368.1 277.0,360.0 268.1,360.0 265.0,362.7 270.0,363.2" fill="#ff0000"/><polygon points="421.0,219.4 423.7,217.0 428.6,221.8 430.0,217.0 433.0,219.9 433.0,228.0 424.1,228.0 421.0,225.3 426.0,224.8" fill="#ff0000"/><path d="M10.3,633.5 C11.6,633.7 14.1,632.4 18.0,634.8 C21.9,637.2 27.9,646.2 33.5,647.7 C39.1,649.2 45.1,643.8 51.6,643.8 C58.1,643.8 65.8,647.8 72.2,647.7 C78.6,647.6 85.1,643.1 90.2,643.0 C95.3,642.9 97.4,647.9 103.0,646.9 C108.6,645.9 117.7,638.0 123.7,637.3 C129.7,636.6 133.6,639.7 139.2,642.5 C144.8,645.3 152.2,651.6 157.3,654.0 C162.5,656.4 164.1,659.0 170.1,656.7 C176.1,654.4 185.2,642.7 193.3,640.0 C201.5,637.3 210.4,639.1 219.0,640.4 C227.6,641.7 236.3,648.0 244.9,647.7 C253.5,647.4 263.0,641.8 270.7,638.6 C278.4,635.4 285.7,629.8 291.3,628.3 C296.9,626.8 299.4,627.7 304.2,629.6 C309.0,631.5 316.0,636.7 320.0,639.7 C324.0,642.7 323.6,645.5 328.0,647.6 C332.4,649.7 340.9,652.0 346.6,652.4 C352.4,652.8 357.2,650.6 362.5,650.3 C367.8,649.9 373.1,651.0 378.4,650.3 C383.7,649.6 389.5,646.3 394.4,646.3 C399.3,646.3 403.2,649.0 407.6,650.3 C412.0,651.6 415.6,653.8 420.9,654.3 C426.2,654.8 433.7,654.3 439.5,653.0 C445.3,651.7 450.2,649.0 455.5,646.3 C460.8,643.6 467.6,638.2 471.4,637.0 C475.1,635.8 475.1,637.1 478.0,638.9 C480.9,640.7 486.9,646.1 488.7,647.6" fill="none" stroke="#ffff00" stroke-width="1" stroke-linejoin="round"/><path d="M10.3,661.8 C11.8,661.2 15.9,656.9 19.3,658.0 C22.7,659.1 27.0,667.0 30.9,668.3 C34.8,669.6 38.2,667.2 42.5,665.7 C46.8,664.2 50.9,659.3 56.7,659.3 C62.5,659.3 69.6,665.1 77.3,665.7 C85.0,666.3 95.9,665.6 103.0,663.0 C110.1,660.4 115.2,651.1 119.9,650.2 C124.7,649.3 127.4,655.3 131.5,657.4 C135.6,659.5 139.7,661.0 144.4,663.0 C149.1,665.0 154.7,668.5 159.8,669.6 C165.0,670.7 169.7,670.9 175.3,669.6 C180.9,668.3 186.0,663.3 193.3,661.8 C200.6,660.3 211.2,660.3 219.0,660.5 C226.8,660.7 232.9,663.0 239.8,663.0 C246.7,663.0 254.0,663.9 260.4,660.5 C266.8,657.1 271.1,648.7 278.4,642.5 C285.7,636.3 297.3,625.9 304.2,623.2 C311.1,620.5 314.7,625.8 320.0,626.4 C325.3,627.0 331.6,626.5 336.0,627.0 C340.4,627.5 343.1,629.0 346.6,629.6 C350.1,630.2 352.3,628.7 357.2,630.4 C362.1,632.1 370.3,639.0 375.8,639.7 C381.3,640.5 386.4,635.1 390.4,634.9 C394.4,634.7 396.4,636.0 399.7,638.4 C403.0,640.8 406.1,645.5 410.3,649.0 C414.5,652.5 420.0,658.1 424.9,659.6 C429.8,661.1 432.2,659.2 439.5,658.3 C446.8,657.4 461.8,655.4 468.7,654.3 C475.6,653.2 477.4,650.2 480.7,651.6 C484.0,653.0 487.4,660.9 488.7,662.8" fill="none" stroke="#008000" stroke-width="2.3" stroke-linejoin="round"/><path d="M10.3,632.2 C11.4,632.2 15.1,631.2 16.8,632.0 C18.5,632.8 19.1,631.0 20.6,637.0 C22.1,643.0 24.1,658.7 25.8,668.0 C27.5,677.3 28.8,694.0 30.9,692.8 C33.0,691.5 36.4,666.3 38.7,660.5 C41.1,654.7 42.5,660.6 45.0,658.0 C47.5,655.4 52.0,648.2 54.0,645.0 C56.0,641.8 55.2,634.7 56.7,638.6 C58.2,642.5 61.1,662.7 63.2,668.3 C65.3,673.9 67.7,672.6 69.6,672.0 C71.5,671.4 73.1,664.4 74.8,664.4 C76.5,664.4 77.9,672.0 80.0,672.0 C82.1,672.0 85.0,666.9 87.6,664.4 C90.2,661.9 92.8,657.6 95.4,656.7 C98.0,655.8 99.8,666.1 103.0,659.0 C106.2,651.9 111.7,618.5 114.7,614.0 C117.7,609.5 118.8,623.8 121.2,632.0 C123.6,640.2 126.8,656.1 128.9,663.0 C131.0,669.9 132.1,673.4 134.0,673.4 C135.9,673.4 137.3,659.4 140.5,663.0 C143.7,666.6 149.8,691.8 153.4,695.3 C157.1,698.8 159.6,686.5 162.4,683.7 C165.2,680.9 167.5,680.3 170.1,678.6 C172.7,676.9 175.8,676.8 177.9,673.4 C180.1,670.0 180.4,663.6 183.0,658.0 C185.6,652.4 190.7,640.9 193.3,640.0 C195.9,639.1 196.3,648.1 198.5,652.8 C200.7,657.5 204.0,668.3 206.2,668.3 C208.3,668.3 208.8,656.2 211.4,652.8 C214.0,649.4 219.1,647.3 221.7,647.7 C224.3,648.1 224.8,650.9 226.9,655.4 C229.1,659.9 232.2,674.1 234.6,674.7 C236.9,675.4 238.8,660.6 241.0,659.3 C243.2,658.0 245.6,667.9 247.5,667.0 C249.4,666.1 250.9,655.3 252.6,654.0 C254.3,652.7 254.8,666.0 257.8,659.3 C260.8,652.6 267.3,622.4 270.7,614.0 C274.1,605.6 276.2,611.8 278.4,609.0 C280.5,606.2 281.0,602.6 283.6,597.4 C286.2,592.2 290.5,578.2 293.9,578.0 C297.3,577.8 301.2,588.7 304.2,596.0 C307.2,603.3 309.2,617.9 312.0,622.0 C314.8,626.1 318.3,619.0 321.0,620.6 C323.7,622.2 325.5,630.5 328.0,631.7 C330.5,632.9 332.7,625.1 336.0,627.7 C339.3,630.4 344.6,645.8 347.9,647.6 C351.2,649.4 352.8,636.4 355.9,638.4 C359.0,640.4 363.6,657.0 366.5,659.6 C369.4,662.2 371.2,655.0 373.0,654.3 C374.8,653.6 374.2,660.5 377.1,655.6 C380.0,650.7 386.8,627.0 390.4,625.0 C393.9,623.0 396.6,640.4 398.4,643.7 C400.2,647.0 399.7,637.3 401.0,645.0 C402.3,652.7 403.2,682.9 406.3,690.1 C409.4,697.3 416.7,688.5 419.6,688.3 C422.5,688.1 421.6,693.1 423.6,688.8 C425.6,684.5 429.4,665.8 431.6,662.3 C433.8,658.8 435.1,668.0 436.9,667.6 C438.7,667.2 440.4,660.3 442.2,659.6 C444.0,658.9 445.7,664.9 447.5,663.6 C449.3,662.3 450.6,654.9 452.8,651.6 C455.0,648.3 458.2,645.5 460.8,643.7 C463.4,641.9 466.5,642.3 468.7,641.0 C470.9,639.7 472.4,636.4 474.0,635.7 C475.6,635.0 476.7,634.6 478.0,637.0 C479.3,639.4 480.9,645.9 482.0,650.3 C483.1,654.7 483.6,655.0 484.7,663.6 C485.8,672.2 488.0,695.6 488.7,702.0" fill="none" stroke="#ff0000" stroke-width="2.1" stroke-linejoin="round"/><g filter="url(#shd)" opacity="0.5"><path d="M381.5,217L421.5,449" stroke="#000" stroke-width="4"/><polygon points="413.8,445.3 427.1,444.0 423.9,456.0" fill="#000"/></g><path d="M379,214L419,446" stroke="#c00000" stroke-width="3.4"/><polygon points="411.3,442.3 424.6,441.0 421.4,453.0" fill="#c00000" stroke="#c00000" stroke-width="1"/><g filter="url(#shd)" opacity="0.5"><path d="M432.5,447L474.5,353" stroke="#000" stroke-width="4"/><polygon points="468.3,351.0 480.3,357.6 480.3,341.6" fill="#000"/></g><path d="M430,444L472,350" stroke="#c00000" stroke-width="3.4"/><polygon points="465.8,348.0 477.8,354.6 477.8,338.6" fill="#c00000" stroke="#c00000" stroke-width="1"/><g filter="url(#shd)" opacity="0.5"><path d="M488.5,357L513.5,548" stroke="#000" stroke-width="4"/><polygon points="508.4,544.0 522.1,542.5 516.9,554.7" fill="#000"/></g><path d="M486,354L511,545" stroke="#c00000" stroke-width="3.4"/><polygon points="505.9,541.0 519.6,539.5 514.4,551.7" fill="#c00000" stroke="#c00000" stroke-width="1"/></g></svg>
<svg style="left:0;top:0" width="1280" height="752" viewBox="0 0 1280 752"><g style="font-family:'Liberation Sans',sans-serif"><path d="M701.5 111V493M701.5 496V600M701.5 603V708" stroke="#000000" stroke-dasharray="3 3" shape-rendering="crispEdges"/><path d="M749.5 111V493M749.5 496V600M749.5 603V708" stroke="#000000" stroke-dasharray="3 3" shape-rendering="crispEdges"/><path d="M797.5 111V493M797.5 496V600M797.5 603V708" stroke="#000000" stroke-dasharray="3 3" shape-rendering="crispEdges"/><path d="M845.5 111V493M845.5 496V600M845.5 603V708" stroke="#000000" stroke-dasharray="3 3" shape-rendering="crispEdges"/><path d="M893.5 111V493M893.5 496V600M893.5 603V708" stroke="#000000" stroke-dasharray="3 3" shape-rendering="crispEdges"/><path d="M941.5 111V493M941.5 496V600M941.5 603V708" stroke="#000000" stroke-dasharray="3 3" shape-rendering="crispEdges"/><path d="M989.5 111V493M989.5 496V600M989.5 603V708" stroke="#000000" stroke-dasharray="3 3" shape-rendering="crispEdges"/><path d="M1037.5 111V493M1037.5 496V600M1037.5 603V708" stroke="#000000" stroke-dasharray="3 3" shape-rendering="crispEdges"/><path d="M1085.5 111V493M1085.5 496V600M1085.5 603V708" stroke="#000000" stroke-dasharray="3 3" shape-rendering="crispEdges"/><path d="M1133.5 111V493M1133.5 496V600M1133.5 603V708" stroke="#000000" stroke-dasharray="3 3" shape-rendering="crispEdges"/><path d="M675 357.5H1230" stroke="#778899" shape-rendering="crispEdges"/><path d="M675 559.5H1230" stroke="#c0c0c0" stroke-dasharray="4 3" shape-rendering="crispEdges"/><path d="M676 624.5H1230" stroke="#000000" stroke-width="1" stroke-dasharray="18 6" shape-rendering="crispEdges"/><path d="M676 655.5H1230" stroke="#000000" stroke-width="1" stroke-dasharray="18 6" shape-rendering="crispEdges"/><path d="M676 687.5H1230" stroke="#000000" stroke-width="1" stroke-dasharray="18 6" shape-rendering="crispEdges"/><path d="M675.5 440V474M677.5 445V463M679.5 442V455M681.5 441V453M683.5 432V466M685.5 416V438M687.5 402V433M689.5 405V423M691.5 404V421M693.5 409V418M695.5 405V418M697.5 402V414M699.5 398V407M701.5 397V426M703.5 404V417M705.5 392V410M707.5 397V418M709.5 410V438M711.5 409V426M713.5 412V434M715.5 397V433M717.5 362V410M719.5 374V403M721.5 381V403M723.5 374V399M725.5 374V402M727.5 373V393M729.5 372V390M731.5 341V385M733.5 337V374M735.5 355V391M737.5 368V399M739.5 358V381M741.5 357V378M743.5 361V381M745.5 370V438M747.5 440V469M749.5 444V479M751.5 449V481M753.5 446V478M755.5 448V478M757.5 434V475M759.5 410V446M761.5 401V422M763.5 409V425M765.5 401V417M767.5 382V406M769.5 377V402M771.5 340V363M773.5 348V373M775.5 348V369M777.5 352V365M779.5 342V359M781.5 289V358M783.5 353V406M785.5 354V383M787.5 349V369M789.5 337V361M791.5 320V342M793.5 316V338M795.5 319V337M797.5 313V379M799.5 315V337M801.5 315V347M803.5 321V353M805.5 345V357M807.5 340V353M809.5 328V347M811.5 320V342M813.5 333V349M815.5 340V357M817.5 323V361M819.5 341V366M821.5 345V382M823.5 358V378M825.5 361V390M827.5 356V367M829.5 358V379M831.5 362V391M833.5 365V389M835.5 377V386M837.5 372V385M839.5 365V381M841.5 366V386M843.5 373V410M845.5 378V414M847.5 374V399M849.5 397V413M851.5 389V418M853.5 374V409M855.5 366V383M857.5 329V362M859.5 340V365M861.5 336V355M863.5 330V353M865.5 313V354M867.5 337V355M869.5 330V351M871.5 334V349M873.5 341V359M875.5 256V367M877.5 260V312M879.5 298V346M881.5 336V353M883.5 344V357M885.5 324V349M887.5 328V343M889.5 329V341M891.5 325V338M893.5 325V342M895.5 328V343M897.5 329V349M899.5 342V366M901.5 214V362M903.5 217V238M905.5 221V249M907.5 225V238M909.5 218V237M911.5 208V231M913.5 188V217M915.5 188V206M917.5 190V201M919.5 185V194M921.5 173V191M923.5 177V197M925.5 178V198M927.5 189V218M929.5 186V214M931.5 177V193M933.5 181V194M935.5 182V193M937.5 161V185M939.5 156V177M941.5 168V215M943.5 198V222M945.5 206V223M947.5 188V215M949.5 131V222M951.5 140V179M953.5 165V185M955.5 165V197M957.5 177V195M959.5 189V234M961.5 189V226M963.5 190V215M965.5 194V211M967.5 186V203M969.5 201V218M971.5 208V234M973.5 217V285M975.5 242V278M977.5 249V281M979.5 259V282M981.5 265V275M983.5 255V273M985.5 254V281M987.5 265V286M989.5 257V277M991.5 253V274M993.5 261V275M995.5 251V273M997.5 263V294M999.5 287V311M1001.5 271V291M1003.5 273V285M1005.5 265V281M1007.5 277V304M1009.5 281V308M1011.5 285V308M1013.5 290V304M1015.5 291V307M1017.5 280V312M1019.5 280V314M1021.5 258V301M1023.5 269V309M1025.5 280V318M1027.5 296V319M1029.5 300V329M1031.5 305V325M1033.5 314V334M1035.5 317V333M1037.5 310V339M1039.5 310V338M1041.5 312V327M1043.5 312V342M1045.5 324V351M1047.5 321V349M1049.5 326V345M1051.5 332V357M1053.5 337V353M1055.5 333V354M1057.5 332V349M1059.5 329V345M1061.5 310V327M1063.5 297V322M1065.5 290V313M1067.5 281V309M1069.5 282V298M1071.5 284V303M1073.5 282V309M1075.5 286V303M1077.5 284V301M1079.5 286V298M1081.5 286V309M1083.5 277V303M1085.5 281V313M1087.5 290V309M1089.5 280V299M1091.5 272V297M1093.5 285V307M1095.5 304V338M1097.5 321V334M1099.5 321V343M1101.5 310V331M1103.5 309V329M1105.5 306V331M1107.5 312V329M1109.5 316V326M1111.5 310V323M1113.5 316V334M1115.5 324V366" stroke="#00ff00" shape-rendering="crispEdges"/><path d="M674.5 110.5H1230.5V493.5H674.5Z M674.5 495.5H1230.5V600.5H674.5Z M674.5 602.5H1230.5V708.5H674.5Z" fill="none" stroke="#000000" shape-rendering="crispEdges"/><polygon points="1111,111 1120,111 1115.5,116" fill="#778899"/><path d="M1231 122.5H1234" stroke="#000000" shape-rendering="crispEdges"/><text x="1236" y="125" fill="#000000" stroke="#000000" stroke-width="0.12" font-size="9.6" letter-spacing="-0.28" text-anchor="start" >0.94735</text><path d="M1231 156.5H1234" stroke="#000000" shape-rendering="crispEdges"/><text x="1236" y="159" fill="#000000" stroke="#000000" stroke-width="0.12" font-size="9.6" letter-spacing="-0.28" text-anchor="start" >0.94605</text><path d="M1231 190.5H1234" stroke="#000000" shape-rendering="crispEdges"/><text x="1236" y="193" fill="#000000" stroke="#000000" stroke-width="0.12" font-size="9.6" letter-spacing="-0.28" text-anchor="start" >0.94480</text><path d="M1231 223.5H1234" stroke="#000000" shape-rendering="crispEdges"/><text x="1236" y="226" fill="#000000" stroke="#000000" stroke-width="0.12" font-size="9.6" letter-spacing="-0.28" text-anchor="start" >0.94350</text><path d="M1231 257.5H1234" stroke="#000000" shape-rendering="crispEdges"/><text x="1236" y="260" fill="#000000" stroke="#000000" stroke-width="0.12" font-size="9.6" letter-spacing="-0.28" text-anchor="start" >0.94220</text><path d="M1231 290.5H1234" stroke="#000000" shape-rendering="crispEdges"/><text x="1236" y="293" fill="#000000" stroke="#000000" stroke-width="0.12" font-size="9.6" letter-spacing="-0.28" text-anchor="start" >0.94090</text><path d="M1231 324.5H1234" stroke="#000000" shape-rendering="crispEdges"/><text x="1236" y="327" fill="#000000" stroke="#000000" stroke-width="0.12" font-size="9.6" letter-spacing="-0.28" text-anchor="start" >0.93965</text><path d="M1231 390.5H1234" stroke="#000000" shape-rendering="crispEdges"/><text x="1236" y="393" fill="#000000" stroke="#000000" stroke-width="0.12" font-size="9.6" letter-spacing="-0.28" text-anchor="start" >0.93710</text><path d="M1231 423.5H1234" stroke="#000000" shape-rendering="crispEdges"/><text x="1236" y="426" fill="#000000" stroke="#000000" stroke-width="0.12" font-size="9.6" letter-spacing="-0.28" text-anchor="start" >0.93585</text><path d="M1231 456.5H1234" stroke="#000000" shape-rendering="crispEdges"/><text x="1236" y="459" fill="#000000" stroke="#000000" stroke-width="0.12" font-size="9.6" letter-spacing="-0.28" text-anchor="start" >0.93455</text><path d="M1231 489.5H1234" stroke="#000000" shape-rendering="crispEdges"/><text x="1236" y="492" fill="#000000" stroke="#000000" stroke-width="0.12" font-size="9.6" letter-spacing="-0.28" text-anchor="start" >0.93330</text><path d="M1232 351H1270V362H1232Z" fill="#000"/><text x="1236" y="360.3" fill="#fff" stroke="#fff" stroke-width="0.12" font-size="9.6" letter-spacing="-0.28" text-anchor="start" >0.93835</text><text x="1234" y="505.5" fill="#000000" stroke="#000000" stroke-width="0.12" font-size="9.6" letter-spacing="-0.288" text-anchor="start" >0.004751</text><text x="1234" y="563" fill="#000000" stroke="#000000" stroke-width="0.12" font-size="9.6" letter-spacing="-0.224" text-anchor="start" >0.00</text><text x="1235" y="563" fill="#000000" stroke="#000000" stroke-width="0.12" font-size="9.6" letter-spacing="-0.336" text-anchor="start" >0</text><path d="M1231 559.5H1234" stroke="#000" shape-rendering="crispEdges"/><text x="1233" y="597.5" fill="#000000" stroke="#000000" stroke-width="0.12" font-size="9.6" letter-spacing="-0.125" text-anchor="start" >-0.00294</text><text x="1235" y="613.5" fill="#000000" stroke="#000000" stroke-width="0.12" font-size="9.6" letter-spacing="-0.336" text-anchor="start" >0</text><text x="1233" y="627.3" fill="#000000" stroke="#000000" stroke-width="0.12" font-size="9.6" letter-spacing="0.067" text-anchor="start" >-20</text><text x="1233" y="657.8" fill="#000000" stroke="#000000" stroke-width="0.12" font-size="9.6" letter-spacing="0.067" text-anchor="start" >-50</text><text x="1233" y="689.4" fill="#000000" stroke="#000000" stroke-width="0.12" font-size="9.6" letter-spacing="0.067" text-anchor="start" >-80</text><text x="1233" y="704.6" fill="#000000" stroke="#000000" stroke-width="0.12" font-size="9.6" letter-spacing="-0.067" text-anchor="start" >-100</text><path d="M675.5 709V712" stroke="#000000" shape-rendering="crispEdges"/><text x="674" y="721" fill="#000000" stroke="#000000" stroke-width="0.12" font-size="9.6" letter-spacing="-0.261" text-anchor="start" >16 Jul 2014</text><path d="M739.5 709V712" stroke="#000000" shape-rendering="crispEdges"/><text x="738" y="721" fill="#000000" stroke="#000000" stroke-width="0.12" font-size="9.6" letter-spacing="-0.207" text-anchor="start" >17 Jul 19:00</text><path d="M803.5 709V712" stroke="#000000" shape-rendering="crispEdges"/><text x="802" y="721" fill="#000000" stroke="#000000" stroke-width="0.12" font-size="9.6" letter-spacing="-0.207" text-anchor="start" >21 Jul 03:00</text><path d="M867.5 709V712" stroke="#000000" shape-rendering="crispEdges"/><text x="866" y="721" fill="#000000" stroke="#000000" stroke-width="0.12" font-size="9.6" letter-spacing="-0.142" text-anchor="start" >22 Jul 11:00</text><path d="M931.5 709V712" stroke="#000000" shape-rendering="crispEdges"/><text x="930" y="721" fill="#000000" stroke="#000000" stroke-width="0.12" font-size="9.6" letter-spacing="-0.207" text-anchor="start" >23 Jul 19:00</text><path d="M995.5 709V712" stroke="#000000" shape-rendering="crispEdges"/><text x="994" y="721" fill="#000000" stroke="#000000" stroke-width="0.12" font-size="9.6" letter-spacing="-0.207" text-anchor="start" >25 Jul 03:00</text><path d="M1059.5 709V712" stroke="#000000" shape-rendering="crispEdges"/><text x="1058" y="721" fill="#000000" stroke="#000000" stroke-width="0.12" font-size="9.6" letter-spacing="-0.142" text-anchor="start" >28 Jul 11:00</text><rect x="675" y="113" width="220" height="11" fill="#fff"/><polygon points="678,117 685,117 681.5,121" fill="#000"/><text x="690.8" y="122" fill="#000000" stroke="#000000" stroke-width="0.12" font-size="9.6" letter-spacing="-0.055" text-anchor="start" >AUDUSD,H1</text><text x="752.2" y="122" fill="#000000" stroke="#000000" stroke-width="0.12" font-size="9.6" letter-spacing="-0.446" text-anchor="start" >0.93945</text><text x="787.9000000000001" y="122" fill="#000000" stroke="#000000" stroke-width="0.12" font-size="9.6" letter-spacing="-0.446" text-anchor="start" >0.93955</text><text x="823.6" y="122" fill="#000000" stroke="#000000" stroke-width="0.12" font-size="9.6" letter-spacing="-0.446" text-anchor="start" >0.93805</text><text x="859.3000000000001" y="122" fill="#000000" stroke="#000000" stroke-width="0.12" font-size="9.6" letter-spacing="-0.446" text-anchor="start" >0.93835</text><text x="679.5" y="507.5" fill="#000000" stroke="#000000" stroke-width="0.12" font-size="9.6" letter-spacing="-0.139" text-anchor="start" >AO_Zotik -0.000589</text><text x="679" y="615" fill="#000000" stroke="#000000" stroke-width="0.12" font-size="9.6" letter-spacing="-0.114" text-anchor="start" >WPR_VSmark(21|55|77|277) -61.7668</text><path d="M674.4,566.2 C676.7,564.8 683.7,560.0 688.4,558.0 C693.1,556.0 695.9,555.6 702.5,554.4 C709.1,553.1 721.7,550.5 728.3,550.5 C734.9,550.5 738.4,552.4 742.3,554.4 C746.2,556.4 748.2,560.9 751.7,562.7 C755.2,564.5 759.5,565.4 763.4,565.0 C767.3,564.6 770.0,561.9 775.1,560.3 C780.2,558.7 787.6,557.0 793.9,555.6 C800.1,554.2 806.8,550.7 812.6,552.1 C818.5,553.5 822.4,561.1 829.0,563.8 C835.6,566.5 846.6,568.9 852.5,568.5 C858.4,568.1 859.1,563.6 864.2,561.5 C869.3,559.4 877.1,556.6 883.0,555.6 C888.9,554.6 893.9,556.6 899.4,555.6 C904.9,554.6 909.9,550.5 915.8,549.8 C921.6,549.1 929.8,550.8 934.5,551.4 C939.2,552.0 939.6,551.8 943.9,553.3 C948.1,554.8 955.4,557.8 960.0,560.3 C964.6,562.8 967.8,566.4 971.7,568.5 C975.6,570.6 978.3,572.8 983.4,573.2 C988.5,573.6 996.0,572.1 1002.2,570.9 C1008.5,569.7 1014.6,568.0 1020.9,566.2 C1027.2,564.4 1033.8,561.3 1039.7,560.3 C1045.6,559.3 1051.0,560.9 1056.1,560.3 C1061.2,559.7 1065.4,557.7 1070.1,556.8 C1074.8,555.9 1079.9,555.3 1084.2,555.1 C1088.5,554.9 1090.8,554.8 1095.9,555.6 C1101.0,556.4 1111.6,559.1 1114.7,559.8" fill="none" stroke="#000" stroke-width="1" stroke-linejoin="round"/><path d="M674.4,579.0 C676.0,578.6 679.0,578.5 683.7,576.7 C688.4,575.0 697.2,570.2 702.5,568.5 C707.8,566.8 710.7,567.8 715.4,566.2 C720.1,564.6 725.7,560.7 730.6,559.1 C735.5,557.5 740.8,555.8 744.7,556.8 C748.6,557.8 750.9,563.6 754.0,565.0 C757.1,566.4 759.9,566.2 763.4,565.0 C766.9,563.8 769.6,560.5 775.1,558.0 C780.6,555.5 790.3,551.6 796.2,549.8 C802.1,548.0 806.8,547.7 810.3,547.4 C813.8,547.1 814.2,547.1 817.3,548.1 C820.4,549.1 824.7,551.6 829.0,553.3 C833.3,554.9 839.2,556.6 843.1,558.0 C847.0,559.4 849.0,561.5 852.5,561.5 C856.0,561.5 859.5,559.6 864.2,558.0 C868.9,556.4 874.7,553.1 880.6,552.1 C886.5,551.1 892.8,555.4 899.4,552.1 C906.0,548.8 913.8,535.9 920.4,532.2 C927.0,528.5 934.9,529.6 939.2,529.8 C943.5,530.0 942.7,532.6 946.2,533.4 C949.7,534.2 956.1,533.5 960.0,534.5 C963.9,535.5 965.1,535.9 969.4,539.2 C973.7,542.5 978.4,549.9 985.8,554.4 C993.2,558.9 1004.9,563.3 1013.9,566.2 C1022.9,569.1 1032.3,570.7 1039.7,572.0 C1047.1,573.3 1052.9,574.7 1058.4,573.9 C1063.9,573.1 1067.8,569.0 1072.5,567.3 C1077.2,565.5 1081.9,563.8 1086.6,563.4 C1091.3,563.0 1095.9,564.6 1100.6,565.0 C1105.3,565.4 1112.3,565.4 1114.7,565.5" fill="none" stroke="#008000" stroke-width="2.4" stroke-linejoin="round"/><path d="M674.4,592.0 C675.8,590.4 679.9,588.5 682.6,582.6 C685.3,576.7 687.9,561.9 690.8,556.8 C693.7,551.7 697.3,553.1 700.2,552.1 C703.1,551.1 706.1,550.0 708.4,551.0 C710.7,552.0 712.1,559.8 714.2,558.0 C716.3,556.2 718.9,543.5 721.2,540.4 C723.6,537.3 726.1,540.4 728.3,539.2 C730.4,538.0 732.1,532.4 734.1,533.4 C736.1,534.4 738.2,542.7 740.0,545.0 C741.8,547.3 742.6,540.0 744.7,547.4 C746.9,554.8 750.8,582.8 752.9,589.6 C755.0,596.4 755.5,593.3 757.6,588.4 C759.8,583.5 763.1,568.5 765.8,560.3 C768.5,552.1 771.7,543.7 774.0,539.2 C776.3,534.7 778.0,532.0 779.8,533.4 C781.5,534.8 782.1,547.8 784.5,547.4 C786.9,547.0 791.5,533.1 793.9,531.0 C796.2,528.9 797.0,534.3 798.6,534.5 C800.2,534.7 801.7,531.0 803.3,532.2 C804.9,533.4 806.5,540.4 808.0,541.6 C809.5,542.8 809.9,535.3 812.6,539.2 C815.3,543.1 820.5,559.1 824.4,565.0 C828.3,570.9 832.6,573.0 836.1,574.4 C839.6,575.8 843.2,572.2 845.5,573.2 C847.8,574.2 848.7,579.0 850.1,580.2 C851.5,581.4 851.9,584.7 853.7,580.2 C855.5,575.7 858.6,558.8 860.7,553.3 C862.8,547.8 864.4,548.2 866.5,547.4 C868.6,546.6 871.6,551.0 873.6,548.6 C875.6,546.2 877.0,532.7 878.7,532.7 C880.5,532.7 882.2,546.2 884.1,548.6 C886.0,551.0 887.9,547.0 890.0,547.0 C892.1,547.0 895.4,547.8 897.0,548.6 C898.6,549.5 898.0,559.1 899.4,552.1 C900.8,545.1 903.2,514.2 905.2,506.4 C907.2,498.6 909.0,506.2 911.1,505.2 C913.2,504.2 916.0,500.7 918.1,500.5 C920.2,500.3 922.0,501.2 924.0,504.0 C926.0,506.8 927.1,514.5 929.8,517.0 C932.5,519.5 937.7,515.4 940.4,519.3 C943.1,523.2 944.3,538.4 946.2,540.4 C948.1,542.4 949.7,529.4 952.0,531.0 C954.3,532.6 957.9,545.1 960.0,549.8 C962.1,554.5 963.0,557.0 964.7,559.1 C966.5,561.2 968.4,557.6 970.5,562.7 C972.6,567.8 975.2,584.3 977.6,589.6 C980.0,594.9 982.5,594.7 984.6,594.3 C986.8,593.9 988.1,589.1 990.5,587.3 C992.9,585.5 996.6,583.5 998.7,583.7 C1000.9,583.9 1001.9,589.0 1003.4,588.4 C1004.9,587.8 1006.0,580.6 1008.0,580.2 C1010.0,579.8 1012.4,587.7 1015.1,586.1 C1017.8,584.5 1021.9,572.1 1024.4,570.9 C1026.9,569.7 1028.3,577.0 1030.3,579.0 C1032.3,581.0 1034.0,583.0 1036.2,582.6 C1038.4,582.2 1039.9,577.3 1043.2,576.7 C1046.5,576.1 1053.2,579.4 1056.1,579.0 C1059.0,578.6 1058.6,579.1 1060.8,574.4 C1063.0,569.7 1065.9,555.0 1069.0,550.9 C1072.1,546.8 1076.6,549.6 1079.5,549.8 C1082.4,550.0 1084.2,552.3 1086.6,552.1 C1088.9,551.9 1091.5,546.5 1093.6,548.6 C1095.7,550.8 1095.9,562.5 1099.4,565.0 C1102.9,567.5 1112.1,563.3 1114.7,563.8 C1117.3,564.3 1115.0,567.1 1115.1,567.8" fill="none" stroke="#ff0000" stroke-width="2.1" stroke-linejoin="round"/><ellipse cx="1118" cy="565" rx="34" ry="32" fill="none" stroke="#000" stroke-width="4" opacity="0.15" filter="url(#shd)"/><ellipse cx="1117" cy="563" rx="34" ry="32" fill="none" stroke="#1a8a1a" stroke-width="2.2"/><polyline points="675.5,686.3 680.0,677.5 687.0,661.4 698.0,653.4 701.0,658.5 713.5,665.8 717.9,639.5 729.6,640.2 732.5,620.5 736.9,645.3 741.3,630.7 746.4,681.9 750.0,680.4 753.7,683.3 758.8,657.0 767.6,646.8 770.5,617.5 775.8,616.8 781.0,651.2 791.2,619.0 795.6,629.2 799.2,621.2 805.1,635.8 809.5,625.6 819.7,641.0 824.1,646.8 826.3,643.9 832.1,652.6 838.7,648.2 843.1,665.8 849.7,667.3 853.3,651.2 860.6,632.2 866.0,639.5 871.8,648.2 874.8,620.5 877.0,636.5 880.6,662.9 886.5,652.6 893.8,651.9 899.6,667.3 901.1,614.6 904.0,608.8 906.9,613.2 915.7,606.6 924.5,610.2 927.4,617.5 933.3,608.0 940.6,610.2 942.8,627.0 949.3,616.0 959.6,627.8 962.0,629.2 967.8,635.0 971.5,646.8 973.0,671.6 975.2,658.5 981.0,667.3 985.4,662.9 989.8,667.3 997.1,662.9 1001.5,671.6 1005.9,668.7 1012.4,696.5 1017.6,693.6 1022.0,684.8 1024.9,700.9 1030.7,705.3 1036.6,703.8 1041.7,696.5 1044.4,690.6 1047.3,699.4 1051.7,703.8 1057.5,699.4 1061.9,683.3 1066.3,668.7 1070.7,673.1 1075.1,667.3 1079.5,668.7 1082.4,655.6 1086.8,657.0 1090.4,644.6 1093.4,658.5 1095.6,676.0 1098.5,683.3 1104.3,671.6 1108.7,673.1 1111.6,662.9 1115.3,702.3" fill="none" stroke="#1e90ff" stroke-width="1" stroke-linejoin="bevel"/><polyline points="675.5,689.0 680.0,681.0 687.0,665.0 698.0,657.0 701.0,661.0 713.5,669.0 717.9,644.0 729.6,645.0 732.5,624.0 736.9,649.0 741.3,634.0 746.4,684.0 750.0,683.0 753.7,686.0 758.8,661.0 767.6,651.0 770.5,628.5 774.4,622.0 781.0,651.2 791.2,618.3 796.3,628.5 799.2,620.5 805.1,635.0 809.5,624.1 819.7,639.5 826.3,643.9 832.9,655.6 839.4,646.8 843.1,667.3 849.7,668.7 854.1,648.2 860.6,630.7 866.0,633.6 869.7,630.7 873.3,638.0 875.5,608.0 877.7,641.0 881.4,646.8 888.0,637.3 893.8,640.2 898.9,649.7 900.4,619.0 901.8,607.3 909.9,606.6 915.7,605.1 921.6,607.3 927.4,619.0 934.7,608.8 940.6,608.8 943.5,628.5 949.3,611.7 959.6,635.0 962.0,627.8 967.8,630.7 972.2,648.2 975.2,649.7 981.0,655.6 985.4,652.6 997.1,652.6 1001.5,660.0 1005.9,660.0 1011.7,679.0 1017.6,676.0 1021.2,667.3 1024.9,680.4 1030.7,690.6 1036.6,692.1 1041.0,686.3 1045.8,693.6 1051.7,699.4 1057.5,702.3 1063.4,679.0 1069.2,680.4 1075.1,677.5 1080.9,676.8 1085.3,683.3 1091.2,678.2 1095.6,693.6 1100.0,695.8 1105.8,686.3 1111.6,681.9 1115.3,700.9" fill="none" stroke="#9400d3" stroke-width="1" stroke-linejoin="bevel"/><polyline points="674.0,686.0 678.4,679.0 687.9,636.5 691.5,631.4 696.0,628.5 698.1,615.4 701.0,619.0 702.5,624.0 704.7,618.3 707.0,624.0 709.0,625.6 713.5,646.8 716.4,618.3 720.8,633.0 723.7,622.0 727.4,638.0 731.7,613.2 737.6,660.0 741.3,631.4 744.2,643.9 747.1,706.7 753.0,689.2 758.0,657.0 763.2,662.9 770.5,622.0 774.4,622.0 777.3,623.4 780.2,643.9 784.6,638.0 789.0,624.9 792.0,619.0 796.3,625.6 800.7,633.6 804.4,651.2 809.5,639.5 812.4,643.9 815.3,646.8 819.7,668.7 822.6,667.3 824.1,683.3 827.0,671.6 831.4,700.9 835.1,689.2 837.3,698.0 840.2,679.0 843.1,705.3 846.0,684.8 849.7,702.3 853.3,676.0 857.7,646.8 859.2,623.4 862.1,616.0 863.6,610.2 865.8,629.2 870.4,634.4 874.8,630.7 879.2,641.0 886.5,652.6 893.0,654.8 899.6,698.0 900.4,658.5 901.8,608.8 905.5,616.0 909.9,608.8 915.7,606.6 921.6,607.3 927.4,624.9 930.3,610.2 933.3,613.2 937.6,608.0 940.6,611.7 942.0,658.5 943.5,676.0 947.9,655.6 949.3,613.2 953.7,655.6 959.6,692.1 961.8,662.9 964.2,676.0 965.7,670.2 969.3,683.3 973.7,706.7 975.9,687.7 981.0,702.3 985.4,693.6 989.0,699.4 992.7,695.0 997.1,687.7 1000.0,704.5 1002.9,687.7 1007.3,681.1 1012.4,697.2 1016.8,681.9 1019.7,664.3 1021.2,638.0 1023.4,661.4 1025.6,695.0 1027.1,681.9 1030.7,700.9 1035.1,699.4 1038.0,687.7 1039.5,679.0 1042.9,693.6 1047.3,681.9 1050.2,695.0 1053.9,693.6 1057.5,696.5 1063.4,635.0 1065.6,618.3 1068.5,623.4 1071.4,631.4 1074.4,619.0 1076.5,623.4 1079.5,631.4 1081.7,613.2 1085.3,635.0 1089.7,619.0 1093.4,643.9 1095.6,670.2 1100.0,686.3 1104.3,667.3 1108.0,676.0 1111.6,667.3 1114.6,702.3" fill="none" stroke="#ff0000" stroke-width="1" stroke-linejoin="bevel"/><polyline points="674.0,699.4 681.3,695.0 687.2,688.5 697.4,686.3 709.0,687.7 712.7,690.6 717.1,681.1 725.2,679.7 731.0,671.6 735.4,676.0 741.3,668.7 744.2,671.6 746.4,693.6 750.0,696.5 755.1,700.9 758.0,680.4 764.6,677.5 770.5,662.9 773.7,665.0 781.0,670.9 784.6,662.9 790.5,651.2 793.4,655.6 798.5,651.9 805.1,660.7 810.9,654.8 815.3,657.0 819.7,665.8 825.6,664.3 831.4,671.6 838.7,667.3 843.1,677.5 849.7,678.9 854.8,665.8 860.6,657.0 866.0,660.0 870.4,658.5 874.0,658.5 874.8,635.0 877.0,645.3 879.9,658.5 882.1,660.0 886.5,654.8 893.8,654.8 899.6,662.1 901.1,621.2 904.0,621.2 908.4,622.0 912.8,614.6 917.2,610.2 923.0,607.3 927.4,616.8 930.3,608.8 934.7,608.0 937.6,605.8 940.6,608.8 942.8,623.4 945.7,619.7 949.3,607.3 953.7,614.6 959.6,627.0 962.5,620.5 967.8,625.6 970.8,630.7 972.2,646.8 975.2,640.9 981.0,644.6 985.4,642.4 991.2,643.1 997.1,641.0 1000.0,647.5 1005.9,646.1 1011.7,651.9 1017.6,650.4 1021.2,643.9 1024.9,651.9 1030.7,659.9 1036.6,658.5 1039.5,655.6 1042.9,660.0 1047.3,659.2 1051.0,664.3 1056.8,662.9 1061.9,654.1 1066.3,649.0 1072.2,650.4 1080.9,649.7 1083.9,651.9 1091.2,649.7 1094.8,658.5 1100.0,659.2 1105.8,655.6 1112.4,656.3 1115.3,667.3" fill="none" stroke="#000" stroke-width="2.4" stroke-linejoin="bevel"/><g filter="url(#shd)" opacity="0.5"><path d="M948.5,142L1048.5,346" stroke="#000" stroke-width="4"/><polygon points="1041.8,346.4 1055.1,340.0 1055.1,356.0" fill="#000"/></g><path d="M946,139L1046,343" stroke="#c00000" stroke-width="3.4"/><polygon points="1039.3,343.4 1052.6,337.0 1052.6,353.0" fill="#c00000" stroke="#c00000" stroke-width="1"/><g filter="url(#shd)" opacity="0.5"><path d="M1063.5,345L1089.5,289" stroke="#000" stroke-width="4"/><polygon points="1083.0,288.2 1095.0,293.5 1095.0,278.9" fill="#000"/></g><path d="M1061,342L1087,286" stroke="#c00000" stroke-width="3.4"/><polygon points="1080.5,285.2 1092.5,290.5 1092.5,275.9" fill="#c00000" stroke="#c00000" stroke-width="1"/><g filter="url(#shd)" opacity="0.5"><path d="M1108.5,302L1140.5,369" stroke="#000" stroke-width="4"/><polygon points="1133.7,370.7 1145.7,365.4 1147.0,380.0" fill="#000"/></g><path d="M1106,299L1138,366" stroke="#c00000" stroke-width="3.4"/><polygon points="1131.2,367.7 1143.2,362.4 1144.5,377.0" fill="#c00000" stroke="#c00000" stroke-width="1"/></g></svg>
<div class="a" style="left:0;top:730px;width:1280px;height:2px;background:#f4f4f4"></div>
<div class="a" style="left:0;top:732px;width:1280px;height:1px;background:#000"></div>
<div class="a" style="left:0;top:733px;width:1280px;height:19px;background:#e1e1e1"></div>
<div class="a" style="left:0;top:733px;width:2px;height:19px;background:#c0c0c0"></div>
<div class="a" style="left:424px;top:732px;width:80px;height:20px;background:#fff;border:1px solid #000;border-width:1px 2px 1px 1px"></div>
<div class="t" style="left:14px;top:736.69px;font-size:11px;color:#7c7e88;transform:scaleX(0.9);transform-origin:0 0">EURUSD,M5</div>
<div class="t" style="left:95px;top:736.69px;font-size:11px;color:#7c7e88;transform:scaleX(0.9);transform-origin:0 0">EURUSD,M15</div>
<div class="t" style="left:181px;top:736.69px;font-size:11px;color:#7c7e88;transform:scaleX(0.9);transform-origin:0 0">GBPUSD,M15</div>
<div class="t" style="left:267px;top:736.69px;font-size:11px;color:#7c7e88;transform:scaleX(0.9);transform-origin:0 0">GBPUSD,H1</div>
<div class="t" style="left:346px;top:736.69px;font-size:11px;color:#7c7e88;transform:scaleX(0.9);transform-origin:0 0">AUDUSD,M15</div>
<div class="t" style="left:435px;top:736.69px;font-size:11px;color:#000;transform:scaleX(0.9);transform-origin:0 0">AUDUSD,H1</div>
<div class="t" style="left:515px;top:736.69px;font-size:11px;color:#7c7e88;transform:scaleX(0.9);transform-origin:0 0">NZDUSD,M15</div>
<div class="t" style="left:602px;top:736.69px;font-size:11px;color:#7c7e88;transform:scaleX(0.9);transform-origin:0 0">NZDUSD,H1</div>
<div class="t" style="left:683px;top:736.69px;font-size:11px;color:#7c7e88;transform:scaleX(0.9);transform-origin:0 0">USDCHF,M15</div>
<div class="t" style="left:769px;top:736.69px;font-size:11px;color:#7c7e88;transform:scaleX(0.9);transform-origin:0 0">USDCHF,H4</div>
<div class="t" style="left:850px;top:736.69px;font-size:11px;color:#7c7e88;transform:scaleX(0.9);transform-origin:0 0">USDCAD,M15</div>
<div class="t" style="left:936px;top:736.69px;font-size:11px;color:#7c7e88;transform:scaleX(0.9);transform-origin:0 0">USDCAD,H4</div>
<div class="t" style="left:1017px;top:736.69px;font-size:11px;color:#7c7e88;transform:scaleX(0.9);transform-origin:0 0">EURGBP,M15</div>
<div class="t" style="left:1103px;top:736.69px;font-size:11px;color:#7c7e88;transform:scaleX(0.9);transform-origin:0 0">EURGBP,H1</div>
<div class="t" style="left:1182px;top:736.69px;font-size:11px;color:#7c7e88;transform:scaleX(0.9);transform-origin:0 0">USDJPY,M15</div>
<div class="a" style="left:84px;top:736px;width:1px;height:13px;background:#555"></div>
<div class="a" style="left:172px;top:736px;width:1px;height:13px;background:#555"></div>
<div class="a" style="left:257px;top:736px;width:1px;height:13px;background:#555"></div>
<div class="a" style="left:336px;top:736px;width:1px;height:13px;background:#555"></div>
<div class="a" style="left:592px;top:736px;width:1px;height:13px;background:#555"></div>
<div class="a" style="left:672px;top:736px;width:1px;height:13px;background:#555"></div>
<div class="a" style="left:758px;top:736px;width:1px;height:13px;background:#555"></div>
<div class="a" style="left:840px;top:736px;width:1px;height:13px;background:#555"></div>
<div class="a" style="left:926px;top:736px;width:1px;height:13px;background:#555"></div>
<div class="a" style="left:1008px;top:736px;width:1px;height:13px;background:#555"></div>
<div class="a" style="left:1093px;top:736px;width:1px;height:13px;background:#555"></div>
<div class="a" style="left:1172px;top:736px;width:1px;height:13px;background:#555"></div>
<svg style="left:1250px;top:739px" width="6" height="9"><path d="M5 0L0 4.5L5 9z" fill="#9a9a9a"/></svg>
<svg style="left:1267px;top:739px" width="6" height="9"><path d="M0 0L6 4.5L0 9z" fill="#000"/></svg>
</body></html>
